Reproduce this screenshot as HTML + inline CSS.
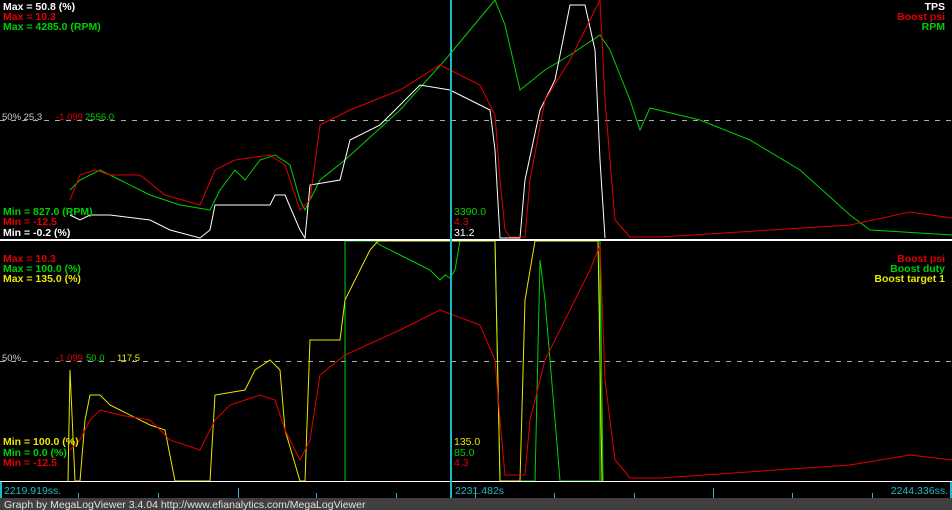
<!DOCTYPE html>
<html><head><style>
body{margin:0;background:#000;width:952px;height:510px;overflow:hidden;font-family:"Liberation Sans",sans-serif}
svg{display:block}
text{font-family:"Liberation Sans",sans-serif;font-size:10.5px}
.b{font-weight:bold}
.s{font-size:9.5px}
</style></head><body>
<svg width="952" height="510" viewBox="0 0 952 510">
<rect width="952" height="510" fill="#000"/>
<line x1="0" y1="120.5" x2="952" y2="120.5" stroke="#aaa" stroke-dasharray="5,6"/>
<line x1="0" y1="361.5" x2="952" y2="361.5" stroke="#aaa" stroke-dasharray="5,6"/>
<polyline fill="none" stroke="#00d000" points="70,190 80,180 100,170 120,180 150,195 180,205 210,210 220,190 235,170 245,180 260,160 275,155 290,165 300,200 305,210 310,200 320,180 345,160 400,110 445,60 470,30 495,0 505,25 520,90 545,70 570,55 600,35 610,50 630,100 640,130 650,108 700,120 750,140 800,170 850,215 870,230 952,235"/>
<polyline fill="none" stroke="#ffffff" points="70,215 80,220 90,215 110,215 150,220 170,230 200,238 210,230 215,205 270,205 275,195 285,195 300,230 305,238 310,185 340,180 350,140 380,125 420,85 450,90 470,100 490,110 495,150 500,238 520,238 525,180 540,110 555,80 570,5 585,5 595,50 600,160 605,238"/>
<polyline fill="none" stroke="#e00000" points="70,200 80,175 95,170 110,175 140,175 165,195 200,205 215,170 235,160 270,155 285,165 300,210 310,200 320,125 350,110 400,90 440,65 480,85 495,115 500,180 505,230 510,237 525,237 530,180 545,100 570,60 590,20 600,0 605,100 615,220 630,237 660,237 850,225 910,212 952,218"/>
<polyline fill="none" stroke="#00d000" points="345,481 345,241 350,241 375,241 380,245 400,255 420,265 430,270 440,280 445,275 450,278 455,270 460,241 495,241 500,481 535,481 540,260 545,300 555,420 560,481 600,481 600,241 603,481"/>
<polyline fill="none" stroke="#e8e800" points="68,481 70,370 75,481 80,481 85,420 90,395 100,395 110,405 120,410 150,425 165,430 175,481 210,481 215,395 245,390 255,370 270,360 280,370 285,430 300,481 305,481 310,340 340,340 345,300 370,250 378,241 495,241 500,481 520,481 525,300 535,241 598,241 602,481"/>
<polyline fill="none" stroke="#e00000" points="70,450 80,440 90,420 100,410 120,415 150,420 170,440 200,450 215,420 230,405 260,395 275,400 285,430 300,460 310,440 320,375 345,355 400,330 440,310 480,325 495,360 500,420 505,475 525,475 530,420 545,360 570,310 590,270 600,245 605,380 615,460 630,478 660,478 850,465 910,455 952,460"/>
<rect x="0" y="239" width="952" height="2" fill="#fff"/>
<rect x="0" y="481" width="952" height="1" fill="#fff"/>
<rect x="450" y="0" width="2" height="498" fill="#20b8c8"/>
<g fill="#20b8c8">
<rect x="0" y="482" width="2" height="16"/>
<rect x="950" y="482" width="2" height="16"/>
<rect x="78" y="493" width="1" height="5"/><rect x="158" y="493" width="1" height="5"/>
<rect x="238" y="488" width="1" height="10"/><rect x="316" y="493" width="1" height="5"/>
<rect x="396" y="493" width="1" height="5"/><rect x="475" y="488" width="1" height="10"/>
<rect x="554" y="493" width="1" height="5"/><rect x="634" y="493" width="1" height="5"/>
<rect x="713" y="488" width="1" height="10"/><rect x="792" y="493" width="1" height="5"/>
<rect x="872" y="493" width="1" height="5"/>
</g>
<text x="4" y="494" fill="#20b8c8">2219.919ss.</text>
<text x="455" y="494" fill="#20b8c8">2231.482s</text>
<text x="948" y="494" fill="#20b8c8" text-anchor="end">2244.336ss.</text>
<rect x="0" y="498" width="952" height="12" fill="#404040"/>
<text x="4" y="508" fill="#e0e0e0">Graph by MegaLogViewer 3.4.04 http://www.efianalytics.com/MegaLogViewer</text>
<text class="b" x="3" y="10" fill="#fff">Max = 50.8 (%)</text>
<text class="b" x="3" y="20" fill="#e00000">Max = 10.3</text>
<text class="b" x="3" y="30" fill="#00d000">Max = 4285.0 (RPM)</text>
<text class="b" x="945" y="10" fill="#fff" text-anchor="end">TPS</text>
<text class="b" x="945" y="20" fill="#e00000" text-anchor="end">Boost psi</text>
<text class="b" x="945" y="30" fill="#00d000" text-anchor="end">RPM</text>
<text class="s" x="2" y="120" fill="#ccc">50% 25.3</text>
<text class="s" x="56" y="120" fill="#e00000">-1.099</text>
<text class="s" x="85" y="120" fill="#00d000">2556.0</text>
<text class="b" x="3" y="215" fill="#00d000">Min = 827.0 (RPM)</text>
<text class="b" x="3" y="225" fill="#e00000">Min = -12.5</text>
<text class="b" x="3" y="236" fill="#fff">Min = -0.2 (%)</text>
<text x="454" y="215" fill="#00d000">3390.0</text>
<text x="454" y="225" fill="#e00000">4.3</text>
<text x="454" y="236" fill="#fff">31.2</text>
<text class="b" x="3" y="262" fill="#e00000">Max = 10.3</text>
<text class="b" x="3" y="272" fill="#00d000">Max = 100.0 (%)</text>
<text class="b" x="3" y="282" fill="#e8e800">Max = 135.0 (%)</text>
<text class="b" x="945" y="262" fill="#e00000" text-anchor="end">Boost psi</text>
<text class="b" x="945" y="272" fill="#00d000" text-anchor="end">Boost duty</text>
<text class="b" x="945" y="282" fill="#e8e800" text-anchor="end">Boost target 1</text>
<text class="s" x="2" y="361" fill="#ccc">50%</text>
<text class="s" x="56" y="361" fill="#e00000">-1.099</text>
<text class="s" x="86" y="361" fill="#00d000">50.0</text>
<text class="s" x="117" y="361" fill="#e8e800">117.5</text>
<text class="b" x="3" y="445" fill="#e8e800">Min = 100.0 (%)</text>
<text class="b" x="3" y="456" fill="#00d000">Min = 0.0 (%)</text>
<text class="b" x="3" y="466" fill="#e00000">Min = -12.5</text>
<text x="454" y="445" fill="#e8e800">135.0</text>
<text x="454" y="456" fill="#00d000">85.0</text>
<text x="454" y="466" fill="#e00000">4.3</text>
</svg>
</body></html>
